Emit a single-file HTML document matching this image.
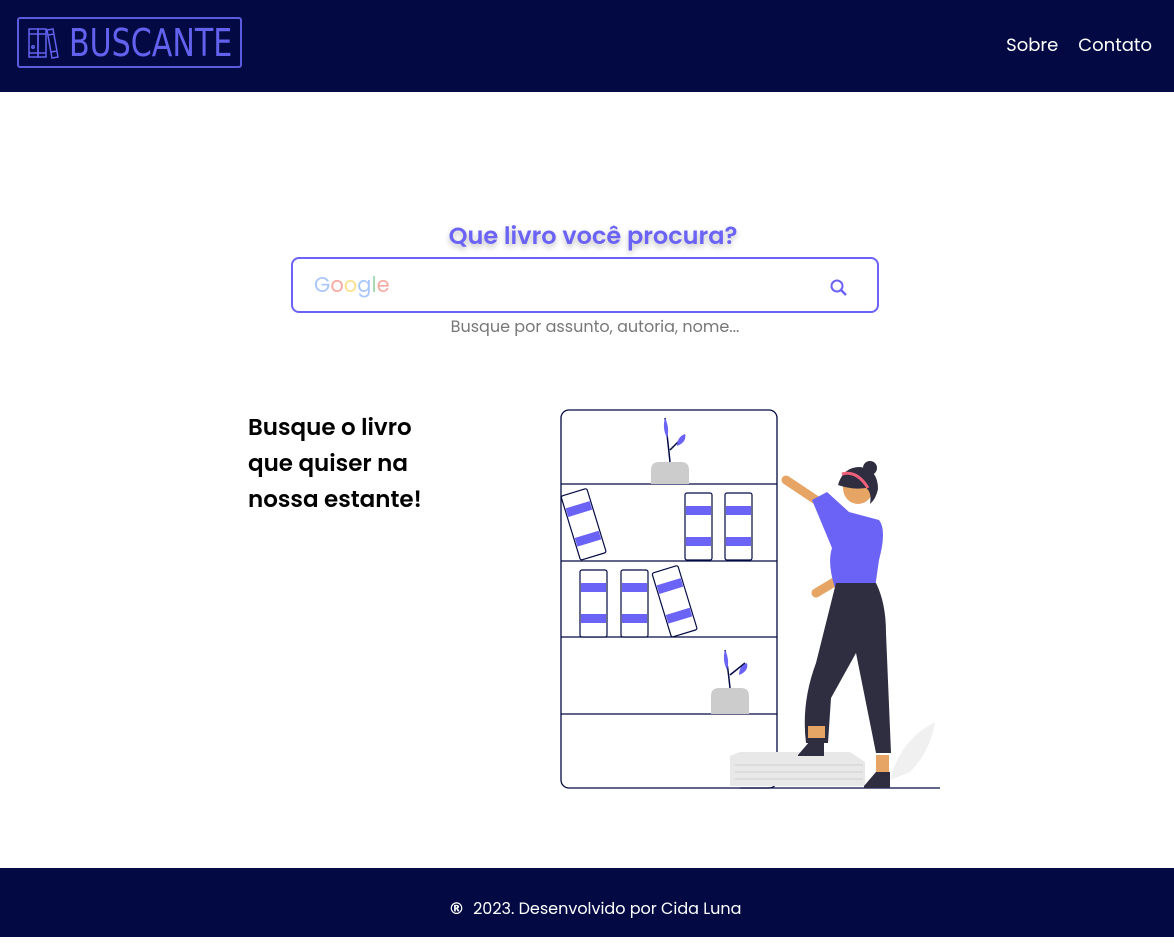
<!DOCTYPE html>
<html><head><meta charset="utf-8"><style>
body{margin:0;width:1174px;height:937px;position:relative;background:#fff;font-family:"Poppins","Liberation Sans",sans-serif;overflow:hidden}
header{position:absolute;left:0;top:0;width:1174px;height:92px;background:#030a43}
.logo{position:absolute;left:17px;top:17px;width:225px;height:51px;border:2px solid #5b5be0;border-radius:3px;box-sizing:border-box}
.logo span{position:absolute;left:50px;top:2px;font-size:38px;color:#6262ee;font-family:"Liberation Sans Narrow","DejaVu Sans Condensed",sans-serif;transform:scaleX(.88);transform-origin:left;font-weight:300;white-space:nowrap}
nav{position:absolute;right:22px;top:32px;color:#fff;font-size:18px}
nav a{margin-left:20px}
h1{position:absolute;left:0;width:1174px;top:219px;margin:0;text-align:center;font-size:24px;color:#6b63f5;font-weight:600;text-shadow:0 3px 6px rgba(0,0,0,.25);padding-left:12px;box-sizing:border-box}
.search{position:absolute;left:291px;top:257px;width:588px;height:56px;border:2px solid #6b63f5;border-radius:8px;box-sizing:border-box}
.g{position:absolute;left:21px;top:11px;font-size:21px;opacity:.45}
.hint{position:absolute;left:0;width:1174px;text-align:center;top:314px;font-size:16px;color:#777;padding-left:16px;box-sizing:border-box}
.txt{position:absolute;left:248px;top:410px;font-size:23px;font-weight:600;line-height:36px;color:#000}
footer{position:absolute;left:0;top:868px;width:1174px;height:69px;background:#030a43;color:#fff;font-size:16px;text-align:center;line-height:82px;padding-left:16px;box-sizing:border-box}
</style></head><body>
<header><div class="logo">
<svg style="position:absolute;left:8px;top:8px" width="34" height="32" viewBox="0 0 34 32" fill="none" stroke="#6262ee" stroke-width="1.5"><rect x="2" y="2" width="9" height="28"/><rect x="11" y="2" width="8" height="28"/><path d="M2 7h9M2 26h9M11 7h8M11 26h8"/><circle cx="6" cy="20" r="1.2"/><path d="M20 3l6-1 5 28-6 1z M21 8l6-1M24 25l6-1"/></svg>
<span>BUSCANTE</span></div>
<nav><a>Sobre</a><a>Contato</a></nav></header>
<h1>Que livro você procura?</h1>
<div class="search"><div class="g"><span style="color:#4285f4">G</span><span style="color:#ea4335">o</span><span style="color:#fbbc05">o</span><span style="color:#4285f4">g</span><span style="color:#34a853">l</span><span style="color:#ea4335">e</span></div>
<svg style="position:absolute;left:536px;top:19px" width="20" height="20" viewBox="0 0 20 20"><circle cx="8" cy="8" r="5.5" fill="none" stroke="#6b63f5" stroke-width="2"/><path d="M12 12l5 5" stroke="#6b63f5" stroke-width="2.5"/></svg></div>
<div class="hint">Busque por assunto, autoria, nome...</div>
<div class="txt">Busque o livro<br>que quiser na<br>nossa estante!</div>
<svg style="position:absolute;left:0;top:0" width="1174" height="937">
<g fill="none" stroke="#030a43" stroke-width="1.3">
<rect x="561" y="410" width="216" height="378" rx="8"/>
<path d="M561 484h216M561 561h216M561 637h216M561 714h216"/>
</g>
<path d="M651 470q0-8 8-8h22q8 0 8 8v14h-38z" fill="#ccc"/>
<path d="M670 462q-2-20-5-44M670 450l15-15" stroke="#030a43" stroke-width="1.5" fill="none"/>
<path d="M665 418q5 10 2 20q-5-10-2-20zM685 434q2 8-8 12q0-9 8-12z" fill="#6b63f5"/>
<path d="M711 696q0-8 8-8h22q8 0 8 8v18h-38z" fill="#ccc"/>
<path d="M730 688q-2-20-5-38M730 675l15-12" stroke="#030a43" stroke-width="1.5" fill="none"/>
<path d="M725 650q5 10 2 20q-5-10-2-20zM747 663q2 8-8 12q0-9 8-12z" fill="#6b63f5"/>
<g stroke="#030a43" stroke-width="1.2" fill="#fff">
<rect x="685" y="493" width="27" height="67" rx="2"/><rect x="725" y="493" width="27" height="67" rx="2"/>
<rect x="580" y="570" width="27" height="67" rx="2"/><rect x="621" y="570" width="27" height="67" rx="2"/>
<rect x="570" y="491" width="27" height="67" rx="2" transform="rotate(-17 583 524)"/>
<rect x="661" y="568" width="27" height="67" rx="2" transform="rotate(-17 674 601)"/>
</g>
<g fill="#6b63f5">
<rect x="686" y="506" width="25" height="9"/><rect x="686" y="537" width="25" height="9"/>
<rect x="726" y="506" width="25" height="9"/><rect x="726" y="537" width="25" height="9"/>
<rect x="581" y="583" width="25" height="9"/><rect x="581" y="614" width="25" height="9"/>
<rect x="622" y="583" width="25" height="9"/><rect x="622" y="614" width="25" height="9"/>
<rect x="571" y="504" width="25" height="9" transform="rotate(-17 583 524)"/><rect x="571" y="535" width="25" height="9" transform="rotate(-17 583 524)"/>
<rect x="662" y="581" width="25" height="9" transform="rotate(-17 674 601)"/><rect x="662" y="612" width="25" height="9" transform="rotate(-17 674 601)"/>
</g>
<path d="M890 780q10-40 45-58q-5 30-25 50z" fill="#f0f0f0"/>
<path d="M730 756l10-4h110l15 10v24h-135z" fill="#e8e8e8"/>
<path d="M735 765h128M735 772h128M735 779h128" stroke="#d0d0d0"/>
<path d="M740 788h200" stroke="#030a43" stroke-width="1.3"/>
<path d="M786 480l45 30" stroke="#e6a565" stroke-width="9" stroke-linecap="round"/>
<path d="M816 593l30-18" stroke="#e6a565" stroke-width="9" stroke-linecap="round"/>
<path d="M812 500l15-8l22 20l30 8q8 10 0 40l-4 28l-40 0q-8-25-3-40z" fill="#6b63f5"/>
<ellipse cx="858" cy="488" rx="15" ry="16" fill="#e6a565"/>
<path d="M838 485q5-18 22-18q18 2 18 22q-2 10-8 15q2-12-4-16q-14 2-28-3z" fill="#2f2e41"/>
<circle cx="870" cy="468" r="7" fill="#2f2e41"/>
<path d="M842 474q15-4 26 14" stroke="#f0607a" stroke-width="3" fill="none"/>
<path d="M836 583l40 0q10 20 10 50l5 120h-15l-20-100l-25 45l-3 45h-22q-5-40 10-80z" fill="#2f2e41"/>
<path d="M808 726h17v12h-17zM876 755h13v18h-13z" fill="#e6a565"/>
<path d="M798 755l12-14h14v15h-26zM864 786l12-14h14v16h-26z" fill="#2f2e41"/>
</svg>
<footer><span style="font-family:'DejaVu Sans',sans-serif;font-size:16px;font-weight:bold">®</span> &nbsp;2023. Desenvolvido por Cida Luna</footer>
</body></html>
